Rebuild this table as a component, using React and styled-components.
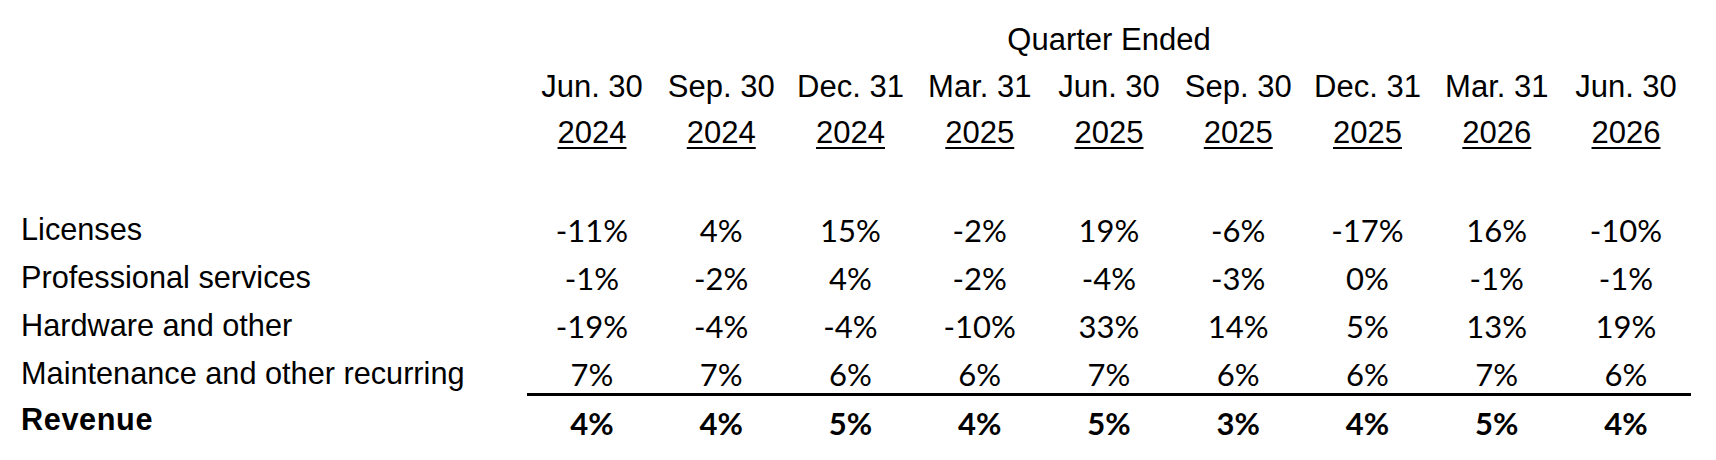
import React from "react";
import styled, { createGlobalStyle } from "styled-components";

const GlobalStyle = createGlobalStyle`
  body {
    margin: 0;
    background: #ffffff;
    color: #000000;
    font-family: "Liberation Sans", Arial, sans-serif;
  }
`;

const columns = [
  { month: "Jun. 30", year: "2024" },
  { month: "Sep. 30", year: "2024" },
  { month: "Dec. 31", year: "2024" },
  { month: "Mar. 31", year: "2025" },
  { month: "Jun. 30", year: "2025" },
  { month: "Sep. 30", year: "2025" },
  { month: "Dec. 31", year: "2025" },
  { month: "Mar. 31", year: "2026" },
  { month: "Jun. 30", year: "2026" },
];

const rows = [
  { label: "Licenses", values: ["-11%", "4%", "15%", "-2%", "19%", "-6%", "-17%", "16%", "-10%"] },
  { label: "Professional services", values: ["-1%", "-2%", "4%", "-2%", "-4%", "-3%", "0%", "-1%", "-1%"] },
  { label: "Hardware and other", values: ["-19%", "-4%", "-4%", "-10%", "33%", "14%", "5%", "13%", "19%"] },
  { label: "Maintenance and other recurring", values: ["7%", "7%", "6%", "6%", "7%", "6%", "6%", "7%", "6%"] },
];

const total = { label: "Revenue", values: ["4%", "4%", "5%", "4%", "5%", "3%", "4%", "5%", "4%"] };

const Sheet = styled.div`
  padding: 16px 0 0 21px;
`;

// every row shares the same column grid; $line is the text line box,
// $height lets a row be shorter than its line (the rule sits under it)
const Row = styled.div`
  display: grid;
  grid-template-columns: 506.4px repeat(9, 129.25px);
  align-items: start;
  height: ${(p) => p.$height || p.$line || 48}px;
  line-height: ${(p) => p.$line || 48}px;
  margin-top: ${(p) => p.$gap || 0}px;
  font-size: 31px;
`;

const Span = styled.div`
  grid-column: 2 / span 9;
  text-align: center;
`;

const Label = styled.div`
  font-size: 30.7px;
  font-weight: ${(p) => (p.$bold ? 700 : 400)};
  letter-spacing: ${(p) => (p.$bold ? "0.6px" : "0")};
  white-space: nowrap;
`;

const Head = styled.div`
  text-align: center;
  white-space: nowrap;
  text-decoration: ${(p) => (p.$under ? "underline" : "none")};
  text-decoration-thickness: 2px;
  text-underline-offset: 4px;
`;

const Value = styled.div`
  text-align: center;
  font-family: Lato, "Liberation Sans", sans-serif;
  font-weight: ${(p) => (p.$bold ? 700 : 400)};
  border-top: ${(p) => (p.$rule ? "3px solid #000" : "none")};
`;

export default function App() {
  return (
    <>
      <GlobalStyle />
      <Sheet>
        <Row $line={47}>
          <div />
          <Span>Quarter Ended</Span>
        </Row>
        <Row $line={47}>
          <div />
          {columns.map((c, i) => (
            <Head key={i}>{c.month}</Head>
          ))}
        </Row>
        <Row $line={46}>
          <div />
          {columns.map((c, i) => (
            <Head key={i} $under>
              {c.year}
            </Head>
          ))}
        </Row>
        {rows.map((r, ri) => (
          <Row
            key={r.label}
            $gap={ri === 0 ? 50 : 0}
            $height={ri === rows.length - 1 ? 43 : 48}
          >
            <Label>{r.label}</Label>
            {r.values.map((v, i) => (
              <Value key={i}>{v}</Value>
            ))}
          </Row>
        ))}
        <Row $line={54} $height={57}>
          <Label $bold>{total.label}</Label>
          {total.values.map((v, i) => (
            <Value key={i} $bold $rule>
              {v}
            </Value>
          ))}
        </Row>
      </Sheet>
    </>
  );
}
